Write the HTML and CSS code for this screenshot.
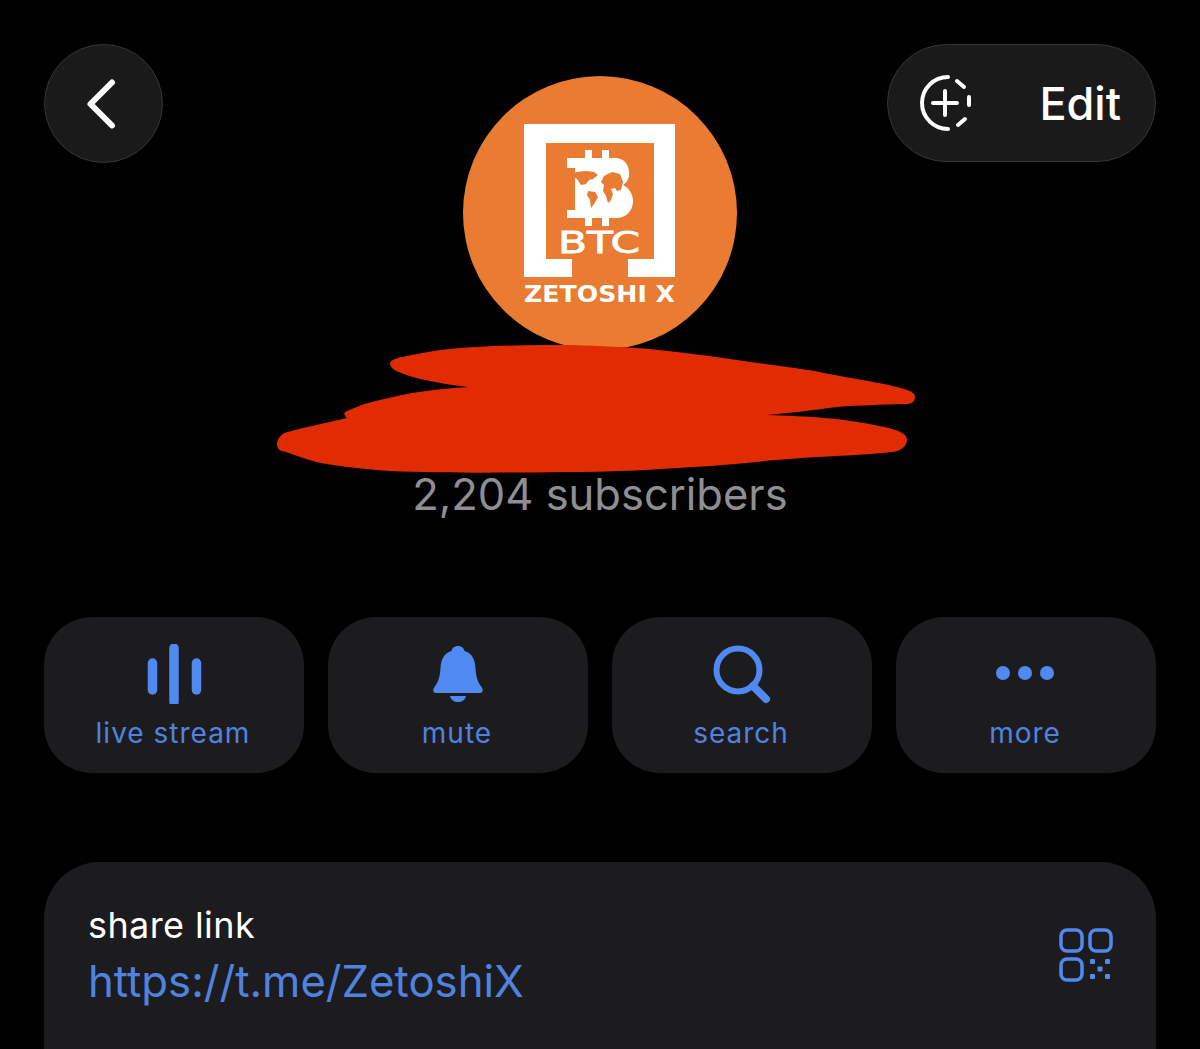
FILE: index.html
```html
<!DOCTYPE html>
<html lang="en">
<head>
<meta charset="utf-8">
<title>Channel info</title>
<link rel="stylesheet" href="styles.css">
</head>
<body>
<main class="page">
  <header class="top">
    <button class="back" aria-label="Back">
      <svg class="back-icon" viewBox="0 0 40 60"><path d="M30 8.500L8.500 30L30 51.500"/></svg>
    </button>
    <div class="avatar">
      <svg viewBox="0 0 274 274" class="logo">
        <circle cx="137" cy="137" r="137" fill="#e97b33"/>
        <path fill="#fff" fill-rule="evenodd" d="M61 48H212V201H165V183H191V67H83V183H109V201H61Z"/>
        <g fill="#fff">
          <rect x="122" y="74" width="7" height="9"/><rect x="139" y="74" width="7" height="9"/>
          <rect x="122" y="141" width="7" height="9"/><rect x="139" y="141" width="7" height="9"/>
          <path d="M104 82H152C162 82 167 90 166 100C165.500 104 163 107 160 109C166 112 170 118 170 125C170 135 163 142 153 142H104V134H112V92H104Z"/>
          <text class="logo-btc" x="95" y="177" textLength="82" lengthAdjust="spacingAndGlyphs">BTC</text>
          <text class="logo-name" x="61" y="226" textLength="151" lengthAdjust="spacingAndGlyphs">ZETOSHI X</text>
        </g>
        <g fill="#e97b33">
          <path d="M113 96l10-1 8 1 4 3-5 4-4 1-3 4-5 1-4-6-6-4z"/>
          <path d="M125 115l7 1 3 5-4 7-3 4-1-8-3-5z"/>
          <path d="M141 100l8-4 8 2 3 8-2 8-4 1-2-3-4 1 2 5-2 6-3 3-2-7-3-5 1-6-3-3z"/>
        </g>
      </svg>
    </div>
    <button class="edit">
      <svg class="edit-icon" viewBox="0 0 60 60">
        <path d="M30 4A26 26 0 1 0 30 56"/>
        <path d="M39 8l7 6M51 24v8M47 46l-7 6"/>
        <path d="M15 30H39M27 18V42"/>
      </svg>
      <span>Edit</span>
    </button>
  </header>

  <p class="subs">2,204 subscribers</p>

  <nav class="actions">
    <a class="action">
      <svg class="action-icon" viewBox="0 0 60 60"><g class="bars"><path d="M8.500 19V46"/><path d="M30 4V58"/><path d="M52.500 19V46"/></g></svg>
      <span>live stream</span>
    </a>
    <a class="action">
      <svg class="action-icon" viewBox="0 0 60 60"><path class="solid" d="M30 2c4 0 6 2.500 6.500 5 8 2.500 10.500 9 11 17 .5 8 2 14 6 19 2 2.500 1.500 6-1.500 6H8c-3 0-3.500-3.500-1.500-6 4-5 5.500-11 6-19 .5-8 3-14.500 11-17C24 4.500 26 2 30 2z"/><path class="solid" d="M22 52h16c-1 4-4 6-8 6s-7-2-8-6z"/></svg>
      <span>mute</span>
    </a>
    <a class="action">
      <svg class="action-icon" viewBox="0 0 60 60"><circle class="line" cx="26" cy="26" r="21.500"/><path class="handle" d="M41 42L54 55"/></svg>
      <span>search</span>
    </a>
    <a class="action">
      <svg class="action-icon" viewBox="0 0 60 60"><g class="solid"><circle cx="7" cy="29" r="7"/><circle cx="29" cy="29" r="7"/><circle cx="51" cy="29" r="7"/></g></svg>
      <span>more</span>
    </a>
  </nav>

  <section class="card">
    <div class="link-row">
      <div class="link-text">
        <div class="link-label">share link</div>
        <a class="link-url">https://t.me/ZetoshiX</a>
      </div>
      <svg class="qr" viewBox="0 0 54 54">
        <rect class="qr-box" x="2" y="2" width="21" height="21" rx="6"/>
        <rect class="qr-box" x="31" y="2" width="21" height="21" rx="6"/>
        <rect class="qr-box" x="2" y="31" width="21" height="21" rx="6"/>
        <g class="solid">
          <rect x="31" y="31" width="5" height="5" rx="1"/><rect x="46" y="31" width="5" height="5" rx="1"/>
          <rect x="38.500" y="38.500" width="5" height="5" rx="1"/>
          <rect x="31" y="46" width="5" height="5" rx="1"/><rect x="46" y="46" width="5" height="5" rx="1"/>
        </g>
      </svg>
    </div>
  </section>

  <svg class="scribble" viewBox="0 0 1200 1049" aria-hidden="true">
    <path d="M390 363C392 359 400 357 407 356C430 351 450 348 477 347C510 345 540 345 572 345C600 346 625 347 650 349C680 352 710 356 737 360C770 365 800 368 824 373C850 378 870 381 889 385C905 389 915 391 915 397C915 403 910 404 906 404C880 405 860 405 837 407C815 410 790 413 767 415C790 416 805 416 824 418C850 420 870 424 889 428C900 431 907 434 907 440C907 447 900 451 893 452C865 455 830 456 802 458C770 460 730 465 694 467C650 470 610 472 564 472C500 473 440 473 390 471C360 469 335 466 316 462C305 459 295 455 286 452C279 451 277 448 277 445C277 440 279 437 284 433C290 431 296 430 303 428C318 425 332 421 347 418C344 416 344 413 345 412C352 409 360 405 368 403C382 399 397 396 412 393C430 390 450 388 468 387C452 385 438 383 425 380C412 377 405 375 399 372C393 370 390 367 390 363Z"/>
  </svg>
</main>
</body>
</html>
```
FILE: styles.css
```css
* { box-sizing: border-box; }
html, body { margin: 0; height: 100%; background: #000; overflow: hidden; }
body { font-family: Inter, "Liberation Sans", sans-serif; color: #fff; }
.page { position: relative; height: 1049px; padding: 44px 44px 0; overflow: hidden; }

.top { display: grid; grid-template-columns: 1fr auto 1fr; align-items: start; }
.back {
  width: 119px; height: 119px; padding: 0; border-radius: 50%;
  background: #1a1a1b; border: 1.5px solid #353537;
  display: flex; align-items: center; justify-content: center;
}
.back-icon { width: 40px; height: 60px; margin-left: -4px; fill: none; stroke: #fff; stroke-width: 6; stroke-linecap: round; stroke-linejoin: round; }
.edit {
  justify-self: end; width: 269px; height: 118px; padding: 0 34px 0 30px; border-radius: 59px;
  background: #1a1a1b; border: 1.5px solid #353537; color: #fff;
  display: flex; align-items: center; justify-content: space-between;
  font: 500 45px Inter, "Liberation Sans", sans-serif;
}
.edit-icon { width: 60px; height: 60px; fill: none; stroke: #fff; stroke-width: 4; stroke-linecap: round; }
.avatar { width: 274px; height: 274px; margin-top: 32px; }
.logo { display: block; width: 274px; height: 274px; }
.logo-btc { font: 400 31px "DejaVu Sans", sans-serif; stroke: #fff; stroke-width: .8px; }
.logo-name { font: 700 23px "DejaVu Sans", sans-serif; }

.subs { margin: 119px 0 0; height: 50px; text-align: center; font-size: 43.500px; line-height: 50px; color: #8e8e93; }

.actions { display: grid; grid-template-columns: repeat(4, 1fr); gap: 24px; margin-top: 98px; }
.action {
  height: 156px; border-radius: 48px; background: #1c1c1e; color: #5083e0;
  display: flex; flex-direction: column; align-items: center; padding-top: 27px;
  font-size: 28px; line-height: 34px; letter-spacing: 1px;
}
.action span { margin-right: 2px; }
.action-icon { width: 60px; height: 60px; margin-bottom: 12px; }
.solid { fill: #5089f0; }
.bars path { fill: none; stroke: #5089f0; stroke-width: 9.500; stroke-linecap: round; }
.line { fill: none; stroke: #5089f0; stroke-width: 6; }
.handle { fill: none; stroke: #5089f0; stroke-width: 8; stroke-linecap: round; }

.card { margin-top: 89px; height: 240px; border-radius: 56px; background: #1c1c1e; padding: 40px 44px; }
.link-row { display: flex; justify-content: space-between; align-items: center; }
.link-label { font-size: 36px; line-height: 46px; letter-spacing: .4px; }
.link-url { display: block; margin-top: 6px; font-size: 43.700px; line-height: 56px; color: #5083e0; }
.qr { width: 54px; height: 54px; margin: 0 -1px 0 0; position: relative; top: -1px; }
.qr-box { fill: none; stroke: #5089f0; stroke-width: 3.500; }

.scribble { position: absolute; left: 0; top: 0; width: 1200px; height: 1049px; fill: #e12b02; pointer-events: none; }
```
